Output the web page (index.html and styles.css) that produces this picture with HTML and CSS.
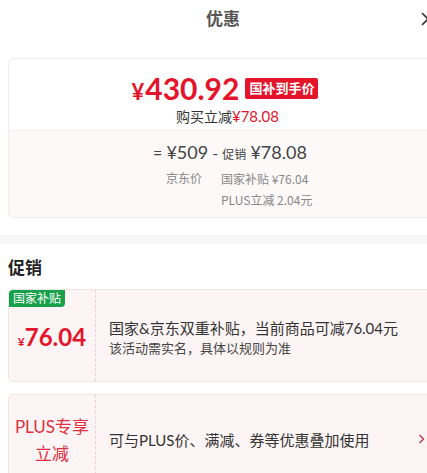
FILE: index.html
```html
<!DOCTYPE html>
<html lang="zh-CN">
<head>
    <meta charset="UTF-8">
    <meta name="viewport" content="width=device-width, initial-scale=1.0">
    <title>优惠</title>
    <link rel="stylesheet" href="styles.css">
</head>
<body>
<div class="sheet">
    <div class="sheet-head">
        <h1>优惠</h1>
        <span class="close">
            <svg width="14" height="14" viewBox="0 0 14 14"><path d="M1 1L13 13M13 1L1 13" stroke="#333" stroke-width="1.6" fill="none"/></svg>
        </span>
    </div>

    <div class="price-card">
        <div class="price-top">
            <div class="final">
                <span class="final-num"><span class="yen">¥</span>430.92</span>
                <span class="final-tag">国补到手价</span>
            </div>
            <div class="cut">购买立减<em>¥78.08</em></div>
        </div>
        <div class="price-detail">
            <div class="formula">= <b>¥509</b> - <small>促销</small> <b>¥78.08</b></div>
            <div class="breakdown">
                <span class="bd-left">京东价</span>
                <div class="bd-right">
                    <p>国家补贴 ¥76.04</p>
                    <p>PLUS立减 2.04元</p>
                </div>
            </div>
        </div>
    </div>

    <div class="band"></div>

    <h2 class="section-title">促销</h2>

    <div class="promo">
        <div class="promo-left">
            <span class="badge">国家补贴</span>
            <span class="promo-amt"><small>¥</small>76.04</span>
        </div>
        <div class="promo-right">
            <p class="promo-main">国家&amp;京东双重补贴，当前商品可减76.04元</p>
            <p class="promo-sub">该活动需实名，具体以规则为准</p>
        </div>
    </div>

    <div class="promo plus">
        <div class="promo-left">
            <span class="plus-name">PLUS专享<br>立减</span>
        </div>
        <div class="promo-right">
            <p class="promo-main">可与PLUS价、满减、券等优惠叠加使用</p>
        </div>
        <span class="arrow">
            <svg width="7" height="12" viewBox="0 0 7 12"><path d="M1.5 2L5.5 6L1.5 10" stroke="#c8334a" stroke-width="1.4" fill="none"/></svg>
        </span>
    </div>
</div>
</body>
</html>
```

FILE: styles.css
```css
html, body {
    margin: 0;
    width: 427px;
    height: 473px;
    overflow: hidden;
    background: #fff;
}
body {
    font-family: "Lato", "Noto Sans CJK SC", sans-serif;
    color: #333;
}
p {
    margin: 0;
}
.sheet {
    width: 446px;
    position: relative;
}
.sheet-head {
    height: 34px;
    display: flex;
    align-items: center;
    justify-content: center;
    margin-bottom: 24px;
}
.sheet-head h1 {
    margin: 0;
    font-size: 17px;
    font-weight: bold;
    color: #555;
}
.close {
    position: absolute;
    left: 421px;
    top: 10px;
}
.price-card {
    margin-left: 8px;
    border: 1px solid #eee;
    border-right: none;
    border-radius: 6px 0 0 6px;
    overflow: hidden;
}
.price-top {
    height: 71px;
    display: flex;
    flex-direction: column;
    align-items: center;
    border-bottom: 1px solid #f6eeee;
}
.final {
    display: flex;
    align-items: center;
    margin-top: 10px;
    margin-left: -5px;
    height: 38px;
}
.final-num {
    font-size: 30px;
    font-weight: bold;
    color: #e4152b;
}
.final-num .yen {
    font-size: 22px;
    margin-right: 1px;
}
.final-tag {
    margin-left: 6px;
    background: #e4152b;
    color: #fff;
    font-size: 13px;
    font-weight: bold;
    padding: 1px 4px;
    border-radius: 2px;
    line-height: 19px;
}
.cut {
    font-size: 14px;
    line-height: 18px;
    color: #333;
}
.cut em {
    font-style: normal;
    color: #e4152b;
    font-size: 15px;
}
.price-detail {
    background: #fdf9f9;
    height: 86px;
    padding-left: 144px;
    box-sizing: border-box;
    padding-top: 9px;
}
.formula {
    font-size: 16px;
    color: #444;
    line-height: 24px;
}
.formula b {
    font-weight: normal;
    font-size: 18px;
}
.formula small {
    font-size: 12px;
}
.breakdown {
    display: flex;
    font-family: "Noto Sans CJK SC", sans-serif;
    font-size: 12px;
    color: #888;
    margin-top: 1px;
}
.bd-left {
    margin-left: 13px;
    width: 55px;
    line-height: 20px;
}
.bd-right p {
    line-height: 21px;
}
.band {
    height: 9px;
    background: #f6f6f8;
    margin-top: 17px;
}
.section-title {
    margin: 13px 0 10px 8px;
    font-size: 17px;
    line-height: 22px;
    font-weight: bold;
    color: #222;
}
.promo {
    margin-left: 8px;
    margin-bottom: 12px;
    height: 91px;
    display: flex;
    background: #fdf5f5;
    border: 1px solid #efe5e5;
    border-right: none;
    border-radius: 5px 0 0 5px;
    position: relative;
}
.promo-left {
    width: 86px;
    border-right: 1px dashed #efcfd3;
    display: flex;
    align-items: center;
    justify-content: center;
    position: relative;
}
.badge {
    position: absolute;
    left: 0;
    top: 0;
    background: #18a04b;
    color: #fff;
    font-size: 12px;
    line-height: 17px;
    padding: 0 4px;
    border-radius: 4px 0 4px 0;
}
.promo-amt {
    font-size: 24px;
    font-weight: bold;
    color: #e4152b;
    margin-top: 2px;
}
.promo-amt small {
    font-size: 12px;
}
.promo-right {
    padding-left: 13px;
    padding-top: 3px;
    display: flex;
    flex-direction: column;
    justify-content: center;
}
.promo-main {
    font-size: 15px;
    line-height: 22px;
    color: #333;
}
.promo-sub {
    font-size: 13px;
    line-height: 18px;
    color: #444;
}
.plus {
    height: 90px;
}
.plus .promo-right {
    padding-top: 0;
}
.plus-name {
    text-align: center;
    color: #e03040;
    font-size: 17px;
    line-height: 27px;
}
.arrow {
    position: absolute;
    left: 409px;
    top: 34px;
}
```
